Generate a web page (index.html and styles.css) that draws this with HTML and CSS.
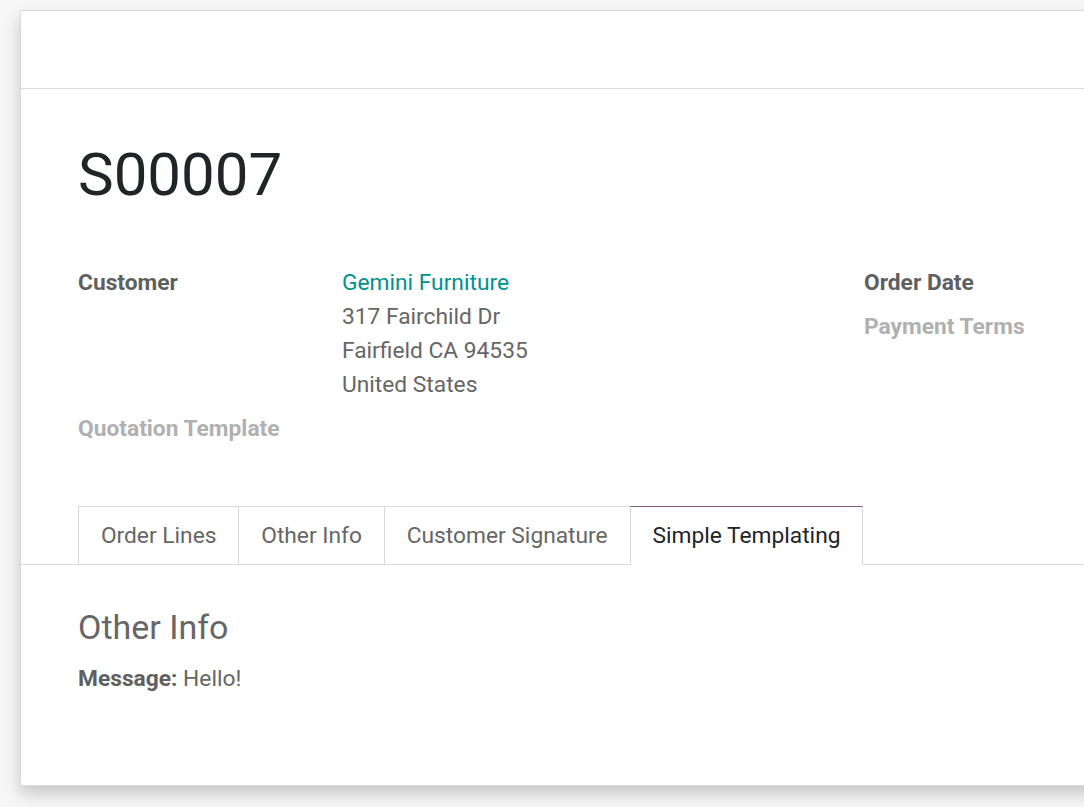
FILE: index.html
```html
<!DOCTYPE html>
<html>
<head>
<meta charset="utf-8">
<link rel="stylesheet" href="styles.css">
</head>
<body>
<div class="sheet">
  <div class="sheet-header"></div>
  <div class="sheet-body">
    <h1 class="title">S00007</h1>
    <div class="groups">
      <div class="group group-left">
        <div class="label">Customer</div>
        <div class="value">
          <a class="link">Gemini Furniture</a>
          <div>317 Fairchild Dr</div>
          <div>Fairfield CA 94535</div>
          <div>United States</div>
        </div>
        <div class="label muted">Quotation Template</div>
        <div class="value"></div>
      </div>
      <div class="group group-right">
        <div class="label">Order Date</div>
        <div class="value"></div>
        <div class="label muted">Payment Terms</div>
        <div class="value"></div>
      </div>
    </div>
  </div>
  <div class="tabs">
    <div class="tab">Order Lines</div>
    <div class="tab">Other Info</div>
    <div class="tab">Customer Signature</div>
    <div class="tab active">Simple Templating</div>
  </div>
  <div class="tab-pane">
    <h3 class="pane-title">Other Info</h3>
    <p class="message"><b>Message:</b> Hello!</p>
  </div>
</div>
</body>
</html>
```
FILE: styles.css
```css
html, body {
  margin: 0;
  padding: 0;
  height: 100%;
  overflow: hidden;
}
body {
  background: #f7f7f7;
  font-family: Roboto, "Liberation Sans", sans-serif;
  font-size: 22.75px;
  line-height: 34px;
  color: #666666;
}
.sheet {
  margin: 10px 0 0 20px;
  width: 1100px;
  height: 776px;
  background: #ffffff;
  border: 1px solid #d8dadd;
  box-sizing: border-box;
  box-shadow: 0 8px 16px rgba(0, 0, 0, 0.2);
}
.sheet-header {
  height: 77px;
  border-bottom: 1px solid #d8dadd;
}
.sheet-body {
  padding: 0 0 0 57px;
}
.title {
  margin: 50px 0 0 0;
  font-size: 60px;
  font-weight: 400;
  line-height: 72px;
  color: #212529;
}
.groups {
  display: flex;
  margin-top: 55px;
}
.group {
  display: grid;
  grid-template-columns: 264px 1fr;
  row-gap: 10px;
  align-content: start;
}
.group-left {
  flex: 0 0 786px;
}
.group-right {
  flex: 1 1 auto;
  min-width: 0;
}
.label {
  font-weight: 700;
  color: #5f5f5f;
}
.label.muted {
  color: #b0b0b0;
}
.value {
  color: #666666;
}
.link {
  display: block;
  color: #00928c;
}
.tabs {
  display: flex;
  margin-top: 60px;
  padding-left: 57px;
  border-bottom: 1px solid #d8dadd;
}
.tab {
  padding: 12px 21.9px 11px;
  border: 1px solid #d8dadd;
  border-bottom: none;
  margin-left: -1px;
  color: #666666;
}
.tab:first-child {
  margin-left: 0;
}
.tab.active {
  color: #212529;
  border-top-color: #875a7b;
  background: #fff;
  margin-bottom: -1px;
  padding-bottom: 12px;
  position: relative;
}
.tab-pane {
  padding: 42px 0 0 57px;
}
.pane-title {
  margin: 0;
  font-size: 34px;
  font-weight: 400;
  line-height: 41px;
  color: #666666;
}
.message {
  margin: 14px 0 0 0;
  color: #666666;
}
.message b {
  color: #5f5f5f;
}
```
